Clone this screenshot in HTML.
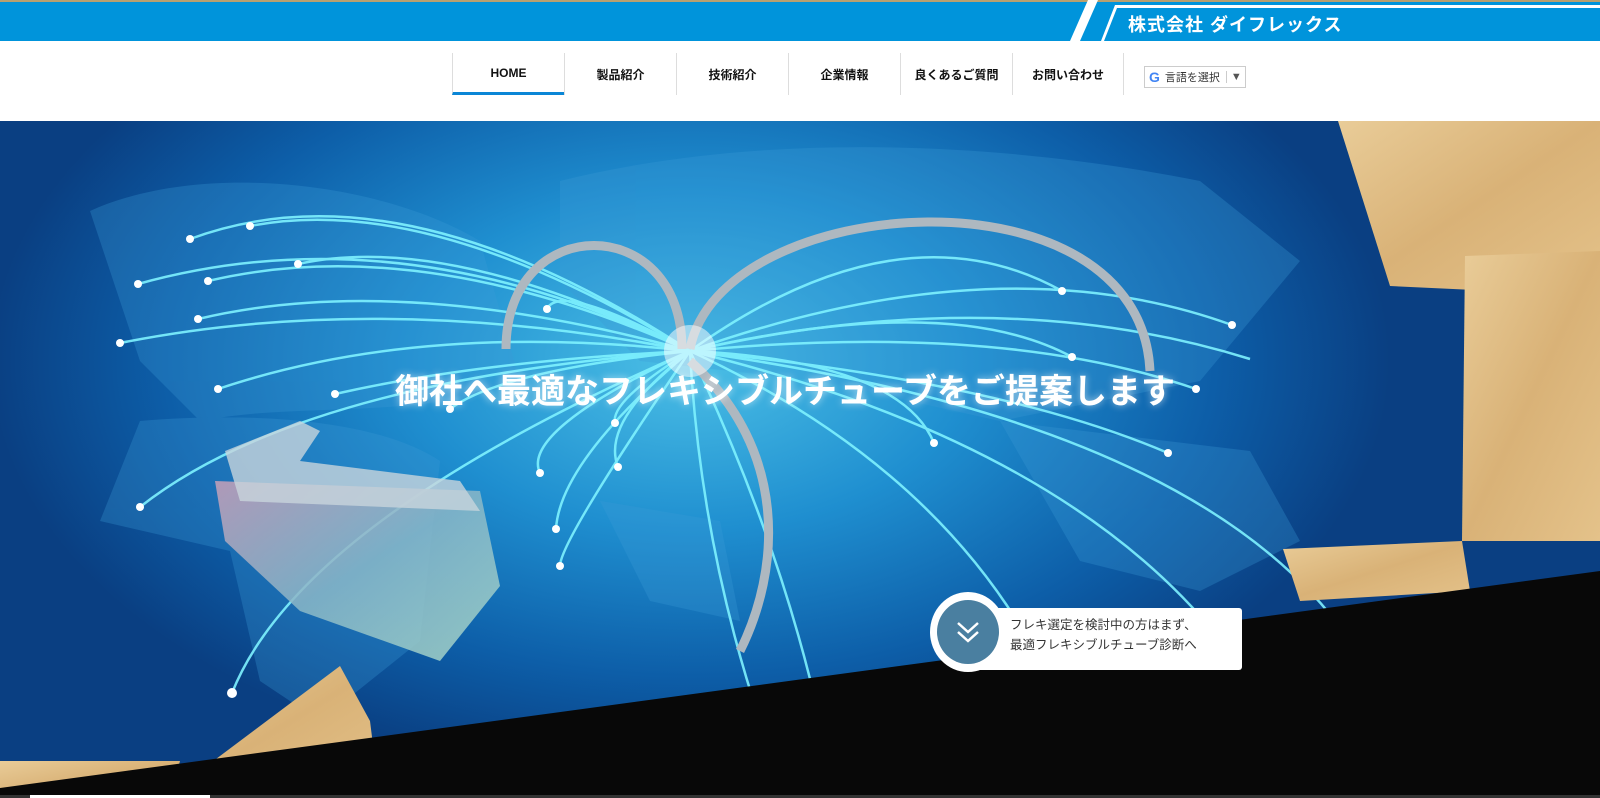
<!DOCTYPE html>
<html><head><meta charset="utf-8"><style>
*{margin:0;padding:0;box-sizing:border-box}
body{width:1600px;height:798px;overflow:hidden;background:#fff;font-family:"Liberation Sans","Noto Sans CJK JP",sans-serif;position:relative}
.top{position:absolute;left:0;top:0;width:1600px;height:41px;background:#0094db;border-top:2px solid #b8a070}
.logo{position:absolute;left:1128px;top:9px;color:#fff;font-weight:bold;font-size:18px;letter-spacing:1px}
.nav{position:absolute;top:53px;left:452px;display:flex}
.nav div{width:112px;height:42px;border-left:1px solid #ddd;font-size:12px;font-weight:bold;color:#111;display:flex;align-items:center;justify-content:center}
.nav div.home{border-bottom:3px solid #0a86d6}
.nav div.last{border-right:1px solid #ddd}
.gt{position:absolute;left:1144px;top:66px;width:102px;height:22px;border:1px solid #ccc;font-size:11px;color:#333;display:flex;align-items:center;padding-left:4px}
.hero{position:absolute;left:0;top:121px;width:1600px;height:677px;overflow:hidden;background:radial-gradient(ellipse 700px 420px at 690px 240px,#4cc0e6 0%,#1f8fd0 40%,#0d5ea8 75%,#0a3f82 100%)}
.title{position:absolute;left:0;width:1570px;text-align:center;top:243px;color:#fff;font-weight:bold;font-size:34px;text-shadow:0 0 8px rgba(255,255,255,.6)}
.btn{position:absolute;left:930px;top:481px}
</style></head><body>
<div class="top">
<svg width="1600" height="41" style="position:absolute;left:0;top:-2px">
<polygon points="1088,0 1098,0 1080,41 1070,41" fill="#fff"/>
<polygon points="1115,5 1600,5 1600,8 1117,8 1104,41 1101,41" fill="#fff"/>
</svg>
<div class="logo">株式会社 ダイフレックス</div>
</div>
<div class="nav">
<div class="home">HOME</div><div>製品紹介</div><div>技術紹介</div><div>企業情報</div><div>良くあるご質問</div><div class="last">お問い合わせ</div>
</div>
<div class="gt"><b style="color:#4285f4;font-size:14px;margin-right:5px">G</b>言語を選択<span style="margin-left:6px;border-left:1px solid #ccc;padding-left:4px;color:#555">▼</span></div>
<div class="hero">
<svg width="1600" height="677" style="position:absolute;left:0;top:0">
<defs>
<linearGradient id="cb" x1="0" y1="0" x2="1" y2="1"><stop offset="0" stop-color="#e9cc98"/><stop offset=".5" stop-color="#d9b277"/><stop offset="1" stop-color="#e4c28a"/></linearGradient>
<linearGradient id="sh" x1="0" y1="0" x2="1" y2="1"><stop offset="0" stop-color="#c9a0b8"/><stop offset=".5" stop-color="#8ab8c8"/><stop offset="1" stop-color="#a9d8c8"/></linearGradient>
</defs>
<g fill="#3d9ad6" opacity=".3">
<path d="M90,90 C200,40 380,60 480,120 L520,260 C420,300 300,280 200,300 L140,240 Z"/>
<path d="M140,300 C260,290 380,300 440,340 L420,520 L320,600 L260,560 L230,430 L100,400 Z"/>
<path d="M560,60 C760,10 1000,20 1200,60 L1300,140 L1200,260 L1000,300 L820,260 L640,240 L560,160 Z"/>
<path d="M1000,300 L1250,330 L1300,420 L1200,470 L1080,440 Z"/>
<path d="M600,380 L720,400 L740,500 L650,480 Z"/>
</g>
<g fill="none" stroke="#7ef2ff" stroke-width="2.5" opacity=".9">
<path d="M690,230 Q400,40 190,118"/><path d="M690,230 Q430,70 250,105"/><path d="M690,230 Q400,90 138,163"/><path d="M690,230 Q420,110 208,160"/><path d="M690,230 Q450,110 298,143"/><path d="M690,230 Q400,150 198,198"/><path d="M690,230 Q380,170 120,222"/><path d="M690,230 Q420,200 218,268"/><path d="M690,230 Q480,240 335,273"/><path d="M690,230 Q500,250 450,288"/><path d="M690,230 Q560,160 547,188"/><path d="M690,230 Q300,260 140,386"/><path d="M690,230 Q520,310 540,352"/><path d="M690,230 Q600,300 618,346"/><path d="M690,230 Q610,280 615,302"/><path d="M690,230 Q560,340 556,408"/><path d="M690,230 Q560,420 560,445"/><path d="M690,230 Q300,400 232,572"/><path d="M690,230 Q900,80 1062,170"/><path d="M690,230 Q1000,120 1232,204"/><path d="M690,230 Q1000,160 1250,238"/><path d="M690,230 Q950,170 1072,236"/><path d="M690,230 Q1000,200 1196,268"/><path d="M690,230 Q900,240 934,322"/><path d="M690,230 Q1000,260 1168,332"/><path d="M690,230 Q1200,300 1350,520"/><path d="M690,230 Q1100,330 1250,560"/><path d="M690,230 Q950,350 1050,560"/><path d="M690,230 Q780,420 820,600"/><path d="M690,230 Q700,420 760,600"/>
</g>
<g fill="#fff">
<circle cx="190" cy="118" r="4"/><circle cx="250" cy="105" r="4"/><circle cx="138" cy="163" r="4"/><circle cx="208" cy="160" r="4"/><circle cx="298" cy="143" r="4"/><circle cx="198" cy="198" r="4"/><circle cx="120" cy="222" r="4"/><circle cx="218" cy="268" r="4"/><circle cx="335" cy="273" r="4"/><circle cx="450" cy="288" r="4"/><circle cx="547" cy="188" r="4"/><circle cx="140" cy="386" r="4"/><circle cx="540" cy="352" r="4"/><circle cx="618" cy="346" r="4"/><circle cx="615" cy="302" r="4"/><circle cx="556" cy="408" r="4"/><circle cx="560" cy="445" r="4"/><circle cx="232" cy="572" r="5"/><circle cx="1062" cy="170" r="4"/><circle cx="1232" cy="204" r="4"/><circle cx="1072" cy="236" r="4"/><circle cx="1196" cy="268" r="4"/><circle cx="934" cy="322" r="4"/><circle cx="1168" cy="332" r="4"/>
</g>
<g fill="none" stroke="#aeb8c0" stroke-width="9">
<path d="M506,228 C506,90 682,90 682,228"/>
<path d="M690,228 C720,70 1140,40 1150,250"/>
<path d="M690,240 C790,330 780,450 740,530"/>
</g>
<circle cx="690" cy="230" r="26" fill="#fff" opacity=".5"/>
<polygon points="215,360 480,370 500,465 440,540 300,490 225,420" fill="url(#sh)" opacity=".85"/>
<polygon points="225,330 300,300 320,310 300,340 460,360 480,390 240,380" fill="#c8d4dc" opacity=".8"/>
<polygon points="1338,0 1600,0 1600,175 1390,165" fill="url(#cb)"/>
<polygon points="1465,135 1600,130 1600,420 1462,420" fill="url(#cb)"/>
<polygon points="1283,428 1462,420 1470,470 1300,480" fill="url(#cb)"/>
<polygon points="160,680 340,545 370,600 380,680" fill="url(#cb)"/>
<polygon points="0,640 180,640 170,677 0,677" fill="url(#cb)"/>
<polygon points="0,667 1600,450 1600,677 0,677" fill="#080808"/>
<rect x="0" y="674" width="1600" height="3" fill="#333"/>
<rect x="30" y="674" width="180" height="3" fill="#fff"/>
</svg>
<div class="title">御社へ最適なフレキシブルチューブをご提案します</div>
<div class="btn">
<div style="position:absolute;left:40px;top:6px;width:272px;height:62px;background:#fff;border-radius:3px;font-size:12.5px;color:#333;padding:7px 0 0 40px;line-height:20px">フレキ選定を検討中の方はまず、<br>最適フレキシブルチューブ診断へ</div>
<div style="position:absolute;left:0;top:-10px;width:76px;height:80px;border-radius:50%;background:#fff"></div>
<div style="position:absolute;left:7px;top:-2px;width:62px;height:64px;border-radius:50%;background:#4a7fa0"></div>
<svg style="position:absolute;left:25px;top:18px" width="26" height="24"><path d="M3,3 L13,12 L23,3 M3,12 L13,21 L23,12" fill="none" stroke="#fff" stroke-width="2.5"/></svg>
</div>
</div>
</body></html>
